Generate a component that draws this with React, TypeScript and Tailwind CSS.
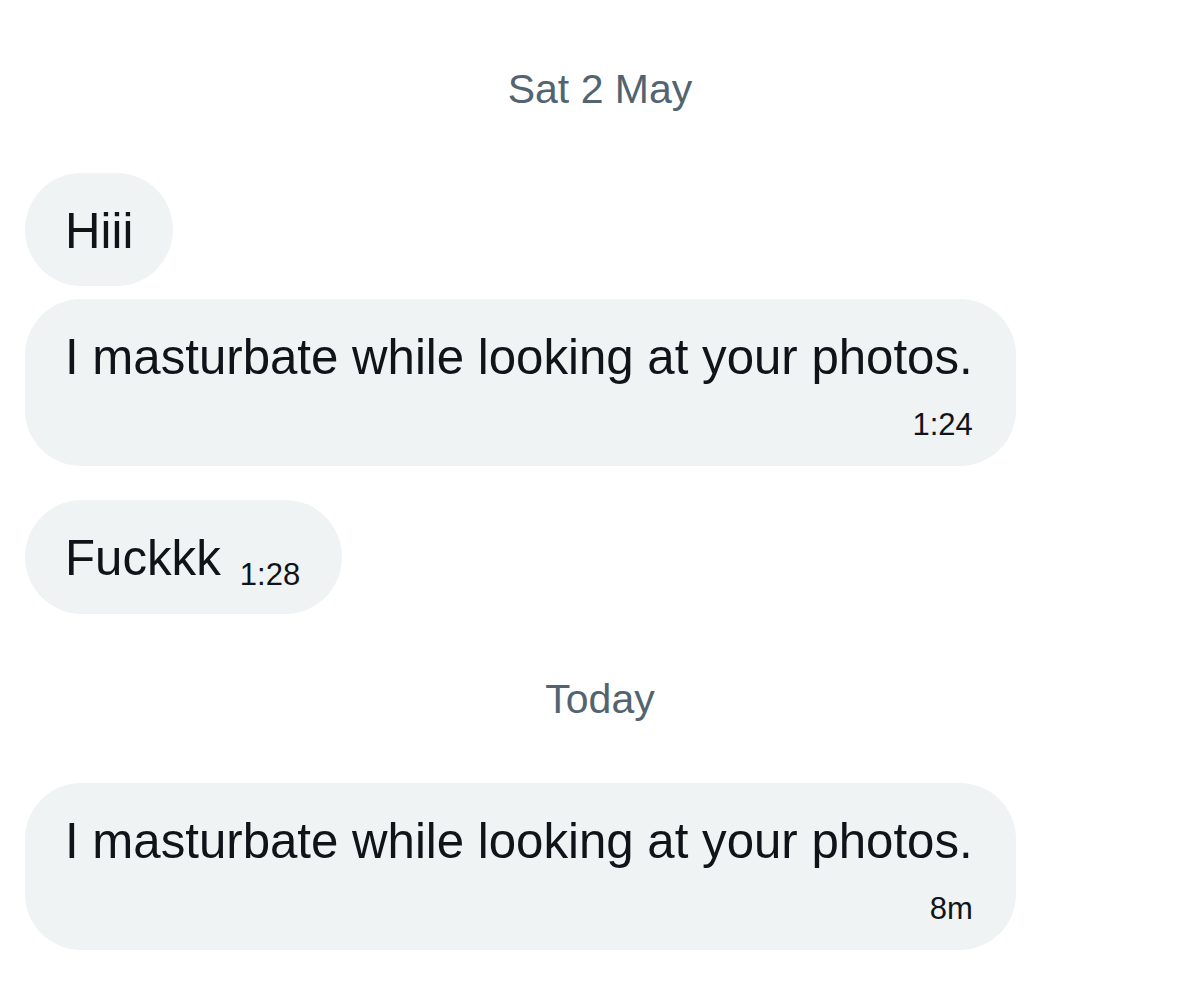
const font = { fontFamily: '"Liberation Sans", Arial, sans-serif' };

function DateLabel({ children }: { children: string }) {
  return (
    <div className="text-center text-[41px] leading-[48px] text-[#536471]">
      {children}
    </div>
  );
}

function Bubble({ text, time }: { text: string; time: string }) {
  return (
    <div className="ml-[25px] self-start rounded-[56px] bg-[#eff3f4] pl-10 pr-[43px] pt-[28px] pb-[23px] text-[#0f1419]">
      <div className="text-[49.2px] leading-[59px] whitespace-nowrap">{text}</div>
      <div className="mt-5 text-right text-[31px] leading-[37px]">{time}</div>
    </div>
  );
}

export default function App() {
  return (
    <main className="min-h-[997px] w-[1200px] bg-white pt-[65px]" style={font}>
      <div className="flex flex-col">
        <DateLabel>Sat 2 May</DateLabel>

        <div className="ml-[25px] mt-[60px] self-start rounded-[57px] bg-[#eff3f4] px-10 pt-[28px] pb-[26px] text-[49.2px] leading-[59px] text-[#0f1419]">
          Hiii
        </div>

        <div className="mt-[13px] flex flex-col">
          <Bubble text="I masturbate while looking at your photos." time="1:24" />
        </div>

        <div className="ml-[25px] mt-[34px] self-start whitespace-nowrap rounded-[57px] bg-[#eff3f4] pl-10 pr-[42px] pt-[28px] pb-[27px] text-[49.2px] leading-[59px] text-[#0f1419]">
          Fuckkk
          <span className="ml-[19px] align-[-10px] text-[31px] leading-[20px]">1:28</span>
        </div>

        <div className="mt-[61px]">
          <DateLabel>Today</DateLabel>
        </div>

        <div className="mt-[60px] flex flex-col">
          <Bubble text="I masturbate while looking at your photos." time="8m" />
        </div>
      </div>
    </main>
  );
}
